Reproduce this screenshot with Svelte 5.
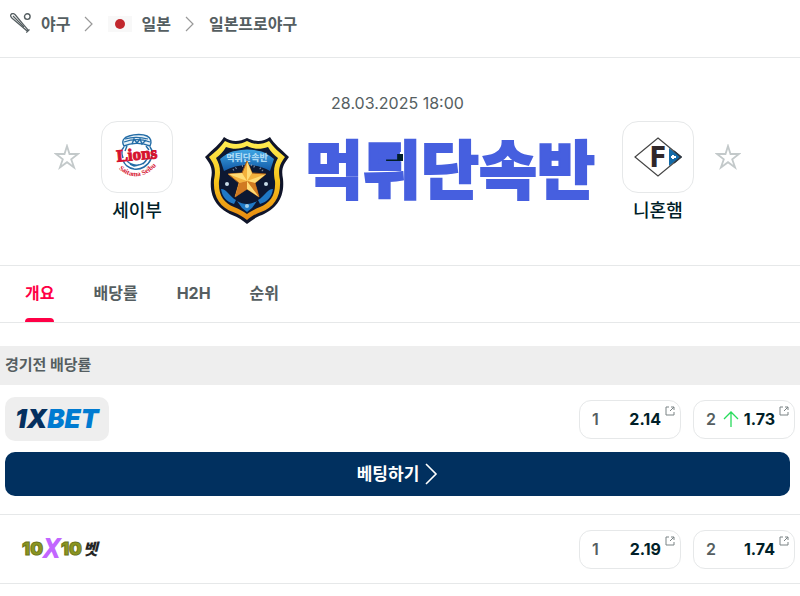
<script lang="ts">
interface Odd { outcome: string; value: string; rising?: boolean; }
interface Bookmaker { id: string; name: string; cta?: string; odds: Odd[]; }

const tabs = ['개요', '배당률', 'H2H', '순위'];
let activeTab = $state('개요');
let favourites = $state({ home: false, away: false });

const bookmakers: Bookmaker[] = [
  {
    id: 'xbet',
    name: '1XBET',
    cta: '베팅하기',
    odds: [{ outcome: '1', value: '2.14' }, { outcome: '2', value: '1.73', rising: true }],
  },
  {
    id: 'ten',
    name: '10X10벳',
    odds: [{ outcome: '1', value: '2.19' }, { outcome: '2', value: '1.74' }],
  },
];
</script>

{#snippet chevron()}
  <svg class="chevron" viewBox="0 0 10 16" width="10" height="16" aria-hidden="true">
    <path d="M1 1l7 7-7 7" fill="none" stroke="currentColor" stroke-width="1.2" />
  </svg>
{/snippet}

{#snippet star(side: 'home' | 'away')}
  <button
    type="button"
    class="star"
    class:on={favourites[side]}
    aria-label="즐겨찾기"
    aria-pressed={favourites[side]}
    onclick={() => (favourites[side] = !favourites[side])}
  >
    <svg viewBox="0 0 26 26" width="26" height="26" aria-hidden="true">
      <path d="M13 2l2.5 8H24l-6.8 5.2 2.9 8.3-7.1-5.3-7.1 5.3 2.9-8.3L2 10h8.5z" stroke="currentColor" stroke-width="1.8" />
    </svg>
  </button>
{/snippet}

<div class="page">
  <nav class="crumbs" aria-label="경로">
    <a href="#baseball">
      <svg viewBox="0 0 22 22" width="22" height="22" fill="none" stroke="#555e61" aria-hidden="true">
        <path d="M1.2 1.2C2.4 0 4 .5 5.2 1.8l7.6 9.1 5.4 6.2-1 1-6.2-5.4-8.9-7.5C.7 4 .1 2.4 1.2 1.2z" stroke-width="1.3" />
        <path d="M3 3l11 11M16.3 19.7l3.2-3.2" stroke-width="1.2" />
        <circle cx="17.3" cy="3.6" r="2.8" stroke-width="1.4" />
      </svg>
      <span>야구</span>
    </a>
    {@render chevron()}
    <a href="#japan"><span class="flag"></span><span>일본</span></a>
    {@render chevron()}
    <a href="#npb">일본프로야구</a>
  </nav>

  <section class="match">
    <time datetime="2025-03-28T18:00">28.03.2025 18:00</time>
    <div class="teams">
      {@render star('home')}
      <a class="team" href="#seibu">
        <span class="crest">
          <svg viewBox="0 0 44 48" width="44" height="48" aria-hidden="true">
            <g fill="none" stroke="#236ca6">
              <path d="M9 13c-3-5 0-9 5-10 6-2 14-2 18 0 4 2 5 6 3 10-7-3-18-4-26 0z" fill="#e8f2f8" stroke-width="1.4" />
              <path d="M10 6c7-2 15-2 23 0M9 9c8-3 18-3 26 0" stroke-width="1.2" />
              <path d="M17 11l2-5 3 4 3-4 2 5 4-4" stroke-width="1.4" />
              <path d="M9 14c-4 4-2 8-1 11M35 14c3 4 3 8 1 12-3 7-10 11-17 10-6-1-10-5-11-9" stroke-width="1.5" />
              <path d="M12 28c5 5 13 6 19 0M15 31l4 2 5-1M28 31l5-6M12 13l-2 5M31 13l3 4" stroke-width="1.4" />
            </g>
            <text x="22" y="27" class="lions" transform="rotate(-5 22 24)">Lions</text>
            <path id="seibu-arc" d="M2 34Q22 54 43 31" fill="none" />
            <text class="seibu"><textPath href="#seibu-arc" startOffset="50%">Saitama Seibu</textPath></text>
          </svg>
        </span>
        <span class="team-name">세이부</span>
      </a>

      <div class="banner">
        <svg class="badge" viewBox="0 0 86 88" width="86" height="88" aria-hidden="true">
          <defs>
            <linearGradient id="gold" x1="0" y1="0" x2="0" y2="1">
              <stop offset="0" stop-color="#ffed52" />
              <stop offset=".5" stop-color="#f8c51b" />
              <stop offset="1" stop-color="#e88a12" />
            </linearGradient>
            <linearGradient id="blue" x1="0" y1="0" x2="0" y2="1">
              <stop offset="0" stop-color="#3fa6e4" />
              <stop offset="1" stop-color="#125aa8" />
            </linearGradient>
          </defs>
          <path d="M20 1c7 5 15 5 23 1 8 4 16 4 23-1 4 7 11 12 19 20-6 8-8 12-6 22 2 20-8 30-21 36-6 2-10 5-15 9-5-4-9-7-15-9C15 73 5 63 7 43c2-10 0-14-6-22C9 13 16 8 20 1z" fill="#10152a" />
          <path d="M21 5c7 4 15 4 22 0 7 4 15 4 22 0 4 6 10 11 16 16-6 8-7 13-5 23 1 17-6 27-19 32-6 2-10 5-14 8-4-3-8-6-14-8C16 71 9 61 10 44c2-10 1-15-5-23C11 16 17 11 21 5z" fill="url(#gold)" />
          <path d="M22 11c8 3 15 2 21-1 6 3 13 4 21 1 3 5 6 8 10 11-4 7-5 13-3 23 1 14-5 22-15 26-5 2-9 4-13 7-4-3-8-5-13-7-10-4-16-12-15-26 2-10 1-16-3-23 4-3 7-6 10-11z" fill="#0d1832" />
          <path d="M16 23c5-4 11-8 15-8 8-2 16-2 24 0 4 0 10 4 15 8l-4 12c-14-8-32-8-46 0z" fill="url(#blue)" />
          <path d="M17 53c6 0 9 8 15 11l-2 4c-7-2-12-7-13-15zM69 53c-6 0-9 8-15 11l2 4c7-2 12-7 13-15zM33 65c6 4 14 4 20 0l-5 7-5 4-5-4z" fill="#1f78c5" />
          <text x="43" y="25" class="ribbon">먹튀단속반</text>
          <path d="M29 34l5-3M38 30l4-1M47 29l4 2M56 32l4 4" stroke="#8290a8" stroke-width="2" stroke-dasharray="1 2" />
          <path d="M43 25l5 12 14 1-11 9 4 14-12-8-12 8 4-14-11-9 14-1z" fill="#f3b13d" stroke="#a35a18" />
          <path d="M43 25v20l5-8zM43 45l19-7-11 9zM43 45l12 16-12-8zM43 45l-12 16 4-14zM43 45l-19-7 14-1z" fill="#ffdc75" />
          <path d="M43 45l8 2 4 14zM43 45l-8 2-4 14zM43 45v8l-12 8z" fill="#d17a21" />
          <circle cx="23" cy="48" r="2" fill="#c8dce8" />
          <circle cx="62" cy="48" r="2" fill="#c8dce8" />
          <circle cx="43" cy="70" r="2" fill="#a5d0eb" />
        </svg>
        <strong>먹튀단속반</strong>
        <span class="score-dash"></span>
      </div>

      <a class="team" href="#nippon-ham">
        <span class="crest">
          <svg viewBox="0 0 48 40" width="48" height="40" aria-hidden="true">
            <path d="M35 11l12 9-12 9z" fill="#146ba8" />
            <path d="M24 1l23 19-23 19L1 20z" fill="none" stroke="#444" stroke-width="1.2" />
            <path d="M40 14l7 6-7 6" fill="none" stroke="#2c3742" stroke-width="1.5" />
            <path d="M37 20h5M39 18v4" stroke="#fff" stroke-width="2" />
            <text x="24" y="30" class="fighters">F</text>
          </svg>
        </span>
        <span class="team-name">니혼햄</span>
      </a>
      {@render star('away')}
    </div>
  </section>

  <div class="tabs" role="tablist">
    {#each tabs as tab}
      <button type="button" role="tab" aria-selected={activeTab === tab} onclick={() => (activeTab = tab)}>{tab}</button>
    {/each}
  </div>

  <section class="odds">
    <h2>경기전 배당률</h2>
    {#each bookmakers as b (b.id)}
      <div class="bookmaker">
        <div class="line">
          <a class="logo {b.id}" href="#{b.id}" aria-label={b.name}>
            {#if b.id === 'xbet'}
              <span class="navy">1X</span><span>BET</span>
            {:else}
              <span class="ten-num">10</span><span class="ten-x">X</span><span class="ten-num">10</span><span class="ten-bet">벳</span>
            {/if}
          </a>
          {#each b.odds as odd}
            <button type="button" class="odd">
              <span class="outcome">{odd.outcome}</span>
              {#if odd.rising}
                <svg class="up" viewBox="0 0 16 18" width="16" height="18" aria-label="상승">
                  <path d="M8 17V2M1 9l7-7 7 7" fill="none" stroke="#28db5c" stroke-width="1.3" />
                </svg>
              {/if}
              <span class="value">{odd.value}</span>
              <svg class="external" viewBox="0 0 10 10" width="10" height="10" aria-hidden="true">
                <path d="M4 1H1v8h8V6M6 1h3v3M9 1L5 5" fill="none" stroke="#7b8385" />
              </svg>
            </button>
          {/each}
        </div>
        {#if b.cta}
          <a class="cta" href="#bet">
            <span>{b.cta}</span>
            <svg viewBox="0 0 14 24" width="14" height="24" aria-hidden="true">
              <path d="M2 2l10 10L2 22" fill="none" stroke="#fff" stroke-width="1.6" />
            </svg>
          </a>
        {/if}
      </div>
    {/each}
  </section>
</div>

<style>
:global(body) { margin: 0; background: #fff; }
.page { font-family: Inter, "Noto Sans CJK KR", sans-serif; font-size: 16px; line-height: 24px; color: #555e61; }
.page * { box-sizing: border-box; }
a { color: inherit; text-decoration: none; }
button { padding: 0; border: 0; background: none; font: inherit; color: inherit; cursor: pointer; }
svg { display: block; flex: none; }

.crumbs { display: flex; align-items: center; gap: 14px; padding: 12px 10px 21px; border-bottom: 1px solid #e6e8e9; font-weight: 700; }
.crumbs a { display: flex; align-items: center; gap: 9px; }
.crumbs .chevron { color: #999; }
.flag { display: flex; align-items: center; justify-content: center; width: 24px; height: 16px; background: #f8f8f8; }
.flag::before { content: ''; width: 10px; height: 10px; border-radius: 50%; background: #c1272d; }

.match { padding: 33px 5px 41px 0; border-bottom: 1px solid #e6e8e9; }
.match time { display: block; text-align: center; }
.teams { display: flex; align-items: flex-start; justify-content: center; margin-top: 6px; }
.star { margin: 23px 21px 0; color: #c3c9ca; }
.star svg { fill: none; }
.star.on { color: #ffcd00; }
.star.on svg { fill: currentColor; }
.team { display: flex; flex-direction: column; align-items: center; gap: 6px; }
.crest { display: flex; align-items: center; justify-content: center; width: 72px; height: 72px; border: 1px solid #e6e8e9; border-radius: 16px; }
.team-name { font-size: 18px; font-weight: 500; color: #001e28; }
.lions { font: 700 17px "Liberation Serif", serif; fill: #d6122f; stroke: #d6122f; text-anchor: middle; }
.seibu { font: 700 7px "Liberation Serif", serif; fill: #d6122f; text-anchor: middle; }
.fighters { font: 700 28px "DejaVu Sans Condensed", "DejaVu Sans", sans-serif; fill: #30282a; text-anchor: middle; }
.ribbon { font: 900 9px "Noto Sans CJK KR", sans-serif; fill: #a9d9f5; text-anchor: middle; }
.banner { position: relative; display: flex; align-items: center; gap: 15px; margin: 15px 27px 0 31px; }
.banner strong { font: 900 63px/64px "Noto Sans CJK KR", sans-serif; color: #465fdf; -webkit-text-stroke: 2px #465fdf; margin-top: -28px; white-space: nowrap; }
.score-dash { position: absolute; left: 182px; top: 18px; width: 17px; height: 7px; background: #001e28; clip-path: polygon(65% 0, 100% 0, 100% 100%, 0 100%, 0 80%, 65% 80%); }

.tabs { display: flex; gap: 39px; padding: 0 25px; border-bottom: 1px solid #e6e8e9; font-weight: 700; }
.tabs button { position: relative; height: 56px; padding-bottom: 2px; }
.tabs button[aria-selected='true'] { color: #ff0046; }
.tabs button[aria-selected='true']::after { content: ''; position: absolute; inset: auto 0 0; height: 4px; border-radius: 4px 4px 0 0; background: #ff0046; }

.odds h2 { margin: 23px 0 0; padding: 7px 5px 8px; background: #eee; font-size: 15px; font-weight: 700; }
.bookmaker { padding: 12px 5px; border-bottom: 1px solid #e6e8e9; }
.line { display: flex; align-items: center; gap: 12px; }
.logo { display: flex; align-items: center; height: 44px; margin-right: auto; border-radius: 10px; white-space: nowrap; }
.xbet { padding: 0 10px; background: #eee; color: #007bd1; font-size: 26px; font-weight: 900; font-style: italic; }
.navy { color: #05305f; }
.ten { padding: 0 17px; font-weight: 900; }
.ten-num { font-size: 18px; color: #8b961f; -webkit-text-stroke: 1px #6c7619; }
.ten-x { font-family: "Liberation Sans Narrow", "DejaVu Sans Condensed", sans-serif; font-size: 26px; font-weight: 700; font-style: italic; color: #c266ff; }
.ten-bet { margin-left: 1px; font-size: 16px; font-style: italic; color: #252525; }
.odd { position: relative; display: flex; align-items: center; width: 102px; height: 39px; padding: 0 19px 0 12px; border: 1px solid #e6e8e9; border-radius: 12px; font-weight: 700; }
.outcome { font-weight: 600; }
.up { margin-left: 7px; }
.value { margin-left: auto; color: #001e28; }
.external { position: absolute; top: 5px; right: 5px; }
.cta { display: flex; align-items: center; justify-content: center; gap: 5px; height: 44px; margin: 11px 5px 6px 0; border-radius: 10px; background: #01305f; color: #fff; font-size: 17px; font-weight: 700; }
</style>
